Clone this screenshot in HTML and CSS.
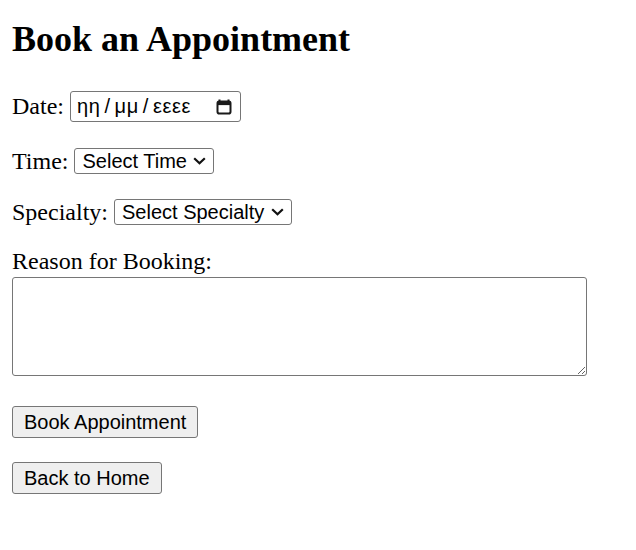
FILE: index.html
```html
<!DOCTYPE html>
<html lang="el">
<head>
<meta charset="utf-8">
<title>Book an Appointment</title>
<link rel="stylesheet" href="styles.css">
</head>
<body>
<main class="page">
  <h1 class="title">Book an Appointment</h1>
  <form class="form">
    <div class="row row-date">
      <label class="label" for="date">Date:</label>
      <div class="date-field" id="date" tabindex="0">
        <span class="date-text"><span>ηη</span><span class="sep">/</span><span>μμ</span><span class="sep">/</span><span>εεεε</span></span>
        <svg class="cal-icon" width="16" height="17" viewBox="0 0 16 17" aria-hidden="true">
          <path d="M3.5 1.5v3M12.5 1.5v3" stroke="#1a1a1a" stroke-width="2" fill="none"/>
          <rect x="1.5" y="3.5" width="13" height="12" rx="1.8" fill="none" stroke="#1a1a1a" stroke-width="2"/>
          <rect x="1.5" y="3.5" width="13" height="3.6" fill="#1a1a1a"/>
        </svg>
      </div>
    </div>
    <div class="row row-time">
      <label class="label" for="time">Time:</label>
      <div class="select-wrap select-time">
        <select id="time" class="select">
          <option>Select Time</option>
        </select>
        <svg class="chev" width="13" height="8" viewBox="0 0 13 8" aria-hidden="true"><path d="M1.2 1.2l5.3 5.1 5.3-5.1" fill="none" stroke="#111" stroke-width="2.2"/></svg>
      </div>
    </div>
    <div class="row row-spec">
      <label class="label" for="spec">Specialty:</label>
      <div class="select-wrap select-spec">
        <select id="spec" class="select">
          <option>Select Specialty</option>
        </select>
        <svg class="chev" width="13" height="8" viewBox="0 0 13 8" aria-hidden="true"><path d="M1.2 1.2l5.3 5.1 5.3-5.1" fill="none" stroke="#111" stroke-width="2.2"/></svg>
      </div>
    </div>
    <label class="label reason-label" for="reason">Reason for Booking:</label>
    <textarea id="reason" class="reason"></textarea>
    <div class="btn-row btn-row-first"><button type="button" class="btn">Book Appointment</button></div>
    <div class="btn-row btn-row-second"><button type="button" class="btn">Back to Home</button></div>
  </form>
</main>
</body>
</html>
```
FILE: styles.css
```css
html, body {
  margin: 0;
  padding: 0;
  background: #fff;
}
body {
  font-family: "Liberation Serif", "Times New Roman", serif;
  font-size: 24px;
  color: #000;
}
.page {
  padding: 19px 12px 40px;
}
.title {
  margin: 0;
  font-size: 36px;
  font-weight: bold;
  line-height: 41px;
}
.form {
  display: flex;
  flex-direction: column;
  align-items: flex-start;
}
.row {
  display: flex;
  align-items: center;
  gap: 6px;
}
.row-date { margin-top: 31px; height: 31px; }
.row-time { margin-top: 26px; height: 26px; }
.row-spec { margin-top: 25px; height: 26px; }
.label {
  font-size: 24px;
  line-height: 27px;
}
.date-field {
  box-sizing: border-box;
  width: 171px;
  height: 31px;
  border: 1px solid #767676;
  border-radius: 3px;
  background: #fff;
  display: flex;
  align-items: center;
  justify-content: space-between;
  padding: 0 8px 0 6px;
  font-family: "Liberation Sans", Arial, sans-serif;
  font-size: 20px;
  color: #000;
}
.date-text {
  display: flex;
  align-items: center;
  letter-spacing: 0.6px;
}
.sep {
  margin: 0 4px;
}
.cal-icon {
  display: block;
}
.select-wrap {
  position: relative;
  display: flex;
}
.select {
  -webkit-appearance: none;
  appearance: none;
  box-sizing: border-box;
  height: 26px;
  border: 1px solid #767676;
  border-radius: 3px;
  background: #fff;
  font-family: "Liberation Sans", Arial, sans-serif;
  font-size: 20px;
  color: #000;
  padding: 0 0 0 7px;
  margin: 0;
  line-height: 24px;
}
.select-time .select { width: 140px; }
.select-spec .select { width: 178px; }
.chev {
  position: absolute;
  right: 8px;
  top: 9px;
  pointer-events: none;
}
.reason-label {
  margin-top: 24px;
  line-height: 24px;
}
.reason {
  box-sizing: border-box;
  margin: 4px 0 0;
  width: 575px;
  height: 99px;
  border: 1px solid #767676;
  border-radius: 3px;
  font-family: "Liberation Mono", monospace;
  font-size: 20px;
  padding: 2px;
}
.btn-row-first { margin-top: 30px; }
.btn-row-second { margin-top: 24px; }
.btn {
  box-sizing: border-box;
  height: 32px;
  margin: 0;
  padding: 0 11px;
  border: 1px solid #767676;
  border-radius: 3px;
  background: #efefef;
  color: #000;
  font-family: "Liberation Sans", Arial, sans-serif;
  font-size: 20px;
  line-height: 30px;
  white-space: nowrap;
}
```
